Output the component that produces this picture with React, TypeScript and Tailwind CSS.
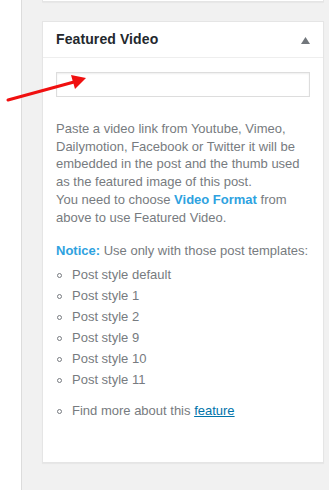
export default function App() {
  const styles = ["Post style default", "Post style 1", "Post style 2", "Post style 9", "Post style 10", "Post style 11"];

  return (
    <div className="w-[329px] h-[490px] flex overflow-hidden bg-[#f1f1f1] font-['Liberation_Sans',Arial,sans-serif]">
      {/* left edge */}
      <div className="w-[22px] shrink-0 bg-white border-r border-[#dcdcdc]" />

      <div className="relative flex-1 pl-[20px] pr-[8px]">
        {/* previous box bottom */}
        <div className="h-[2px] bg-white border-x border-b border-[#e5e5e5] shadow-[0_1px_1px_rgba(0,0,0,0.04)]" />

        {/* Featured Video box */}
        <div className="mt-[19px] bg-white border border-[#e5e5e5] shadow-[0_1px_1px_rgba(0,0,0,0.04)]">
          <div className="h-[36px] flex items-center justify-between pl-[13px] pr-[13px] border-b border-[#eeeeee]">
            <h2 className="text-[14px] font-semibold text-[#23282d] tracking-[0.1px]">Featured Video</h2>
            <svg width="9" height="7" viewBox="0 0 9 7" className="mt-[1px]">
              <path d="M4.5 0 L9 7 L0 7 Z" fill="#72777c" />
            </svg>
          </div>

          <div className="px-[13px] pt-[14px] pb-[42px] text-[13px] leading-[17.6px] text-[#777b80]">
            <input
              type="text"
              className="block w-[254px] h-[25px] border border-[#dddddd] shadow-[inset_0_1px_2px_rgba(0,0,0,0.07)] bg-white outline-none"
            />

            <p className="mt-[23px]">
              Paste a video link from Youtube, Vimeo, Dailymotion, Facebook or Twitter it will be embedded in the post and the thumb used as the featured image of this post.
            </p>
            <p className="mt-[1px]">
              You need to choose <strong className="text-[#2ea2e0] font-bold">Video Format</strong> from above to use Featured Video.
            </p>

            <p className="mt-[15px]">
              <strong className="text-[#2ea2e0] font-bold">Notice:</strong> Use only with those post templates:
            </p>

            <ul className="mt-[7px] flex flex-col gap-[3px]">
              {styles.map((s) => (
                <li key={s} className="flex items-center h-[18px]">
                  <span className="w-[5px] h-[5px] rounded-full border border-[#777b80] ml-[1px] mr-[10px]" />
                  {s}
                </li>
              ))}
            </ul>

            <ul className="mt-[13px]">
              <li className="flex items-center h-[18px]">
                <span className="w-[5px] h-[5px] rounded-full border border-[#777b80] ml-[1px] mr-[10px]" />
                Find more about this&nbsp;<a href="#" className="text-[#0073aa] underline">feature</a>
              </li>
            </ul>
          </div>
        </div>
      </div>

      {/* red arrow */}
      <svg className="absolute left-0 top-0 pointer-events-none" width="100" height="110" viewBox="0 0 100 110">
        <line x1="8" y1="100" x2="74" y2="82" stroke="#f01010" strokeWidth="3" strokeLinecap="round" />
        <path d="M86 78 L71 75 L75 89 Z" fill="#f01010" />
      </svg>
    </div>
  );
}
